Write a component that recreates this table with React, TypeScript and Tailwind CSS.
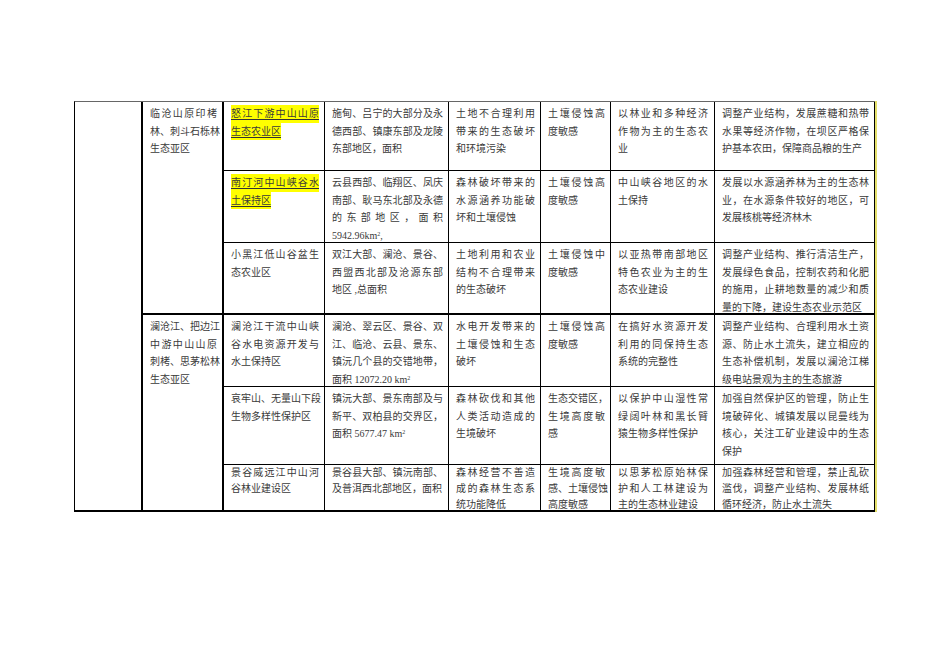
import React from "react";

type Line = React.ReactNode;

type CellProps = {
  lines: Line[];
  hl?: boolean;
  justifyLast?: boolean;
  className?: string;
};

const km2 = (
  <>
    km<sup className="text-[6px]">2</sup>
  </>
);

function Cell({ lines, hl, justifyLast, className = "" }: CellProps) {
  return (
    <div className={`border-b border-r border-black pl-[7px] pr-[5px] ${className}`}>
      {lines.map((line, i) => {
        const justify = i < lines.length - 1 || justifyLast;
        return (
          <div
            key={i}
            className={`whitespace-nowrap ${justify ? "text-justify [text-align-last:justify]" : "text-left"}`}
          >
            {hl ? (
              <span
                className={`${justify ? "block" : "inline-block"} bg-[#ffff00] underline decoration-[#333] underline-offset-2`}
              >
                {line}
              </span>
            ) : (
              line
            )}
          </div>
        );
      })}
    </div>
  );
}

const ROWS: { c3: Line[]; hl?: boolean; c4: Line[]; c5: Line[]; c6: Line[]; c7: Line[]; c8: Line[] }[] = [
  {
    c3: ["怒江下游中山山原", "生态农业区"],
    hl: true,
    c4: ["施甸、吕宁的大部分及永", "德西部、镇康东部及龙陵", "东部地区，面积"],
    c5: ["土地不合理利用", "带来的生态破坏", "和环境污染"],
    c6: ["土壤侵蚀高", "度敏感"],
    c7: ["以林业和多种经济", "作物为主的生态农", "业"],
    c8: ["调整产业结构，发展蔗糖和热带", "水果等经济作物，在坝区严格保", "护基本农田，保障商品粮的生产"],
  },
  {
    c3: ["南汀河中山峡谷水", "土保持区"],
    hl: true,
    c4: ["云县西部、临翔区、凤庆", "南部、耿马东北部及永德", "的东部地区，面积", <>5942.96{km2},</>],
    c5: ["森林破坏带来的", "水源涵养功能破", "坏和土壤侵蚀"],
    c6: ["土壤侵蚀高", "度敏感"],
    c7: ["中山峡谷地区的水", "土保持"],
    c8: ["发展以水源涵养林为主的生态林", "业，在水源条件较好的地区，可", "发展核桃等经济林木"],
  },
  {
    c3: ["小黑江低山谷盆生", "态农业区"],
    c4: ["双江大部、澜沧、景谷、", "西盟西北部及沧源东部", "地区 ,总面积"],
    c5: ["土地利用和农业", "结构不合理带来", "的生态破坏"],
    c6: ["土壤侵蚀中", "度敏感"],
    c7: ["以亚热带南部地区", "特色农业为主的生", "态农业建设"],
    c8: ["调整产业结构、推行清洁生产，", "发展绿色食品，控制农药和化肥", "的施用，止耕地数量的减少和质", "量的下降，建设生态农业示范区"],
  },
  {
    c3: ["澜沧江干流中山峡", "谷水电资源开发与", "水土保持区"],
    c4: ["澜沧、翠云区、景谷、双", "江、临沧、云县、景东、", "镇沅几个县的交错地带，", <>面积 12072.20 {km2}</>],
    c5: ["水电开发带来的", "土壤侵蚀和生态", "破坏"],
    c6: ["土壤侵蚀高", "度敏感"],
    c7: ["在搞好水资源开发", "利用的同保持生态", "系统的完整性"],
    c8: ["调整产业结构、合理利用水土资", "源、防止水土流失，建立相应的", "生态补偿机制，发展以澜沧江梯", "级电站景观为主的生态旅游"],
  },
  {
    c3: ["哀牢山、无量山下段", "生物多样性保护区"],
    c4: ["镇沅大部、景东南部及与", "新平、双柏县的交界区，", <>面积 5677.47 {km2}</>],
    c5: ["森林砍伐和其他", "人类活动造成的", "生境破坏"],
    c6: ["生态交错区，", "生境高度敏", "感"],
    c7: ["以保护中山湿性常", "绿阔叶林和黑长臂", "猿生物多样性保护"],
    c8: ["加强自然保护区的管理，防止生", "境破碎化、城镇发展以昆曼线为", "核心，关注工矿业建设中的生态", "保护"],
  },
  {
    c3: ["景谷威远江中山河", "谷林业建设区"],
    c4: ["景谷县大部、镇沅南部、", "及普洱西北部地区，面积"],
    c5: ["森林经营不善造", "成的森林生态系", "统功能降低"],
    c6: ["生境高度敏", "感、土壤侵蚀", "高度敏感"],
    c7: ["以思茅松原始林保", "护和人工林建设为", "主的生态林业建设"],
    c8: ["加强森林经营和管理，禁止乱砍", "滥伐，调整产业结构、发展林纸", "循环经济，防止水土流失"],
  },
];

const ZONES: Line[][] = [
  ["临沧山原印栲", "林、刺斗石栎林", "生态亚区"],
  ["澜沧江、把边江", "中游中山山原", "刺栲、思茅松林", "生态亚区"],
];

export default function App() {
  return (
    <div className="min-h-[672px] bg-white pl-[74px] pt-[101px] font-['Liberation_Serif','Noto_Sans_CJK_SC',serif] text-[10px] leading-[17.5px] text-[#3a3a3a]">
      <div className="flex w-max">
        <div className="grid grid-cols-[68px_81px_101px_124px_92px_70px_104px_160px] grid-rows-[69px_72px_72px_72px_78px_47px] border-l border-t border-l-black border-t-[#666]">
          <div className="row-span-6 border-b-2 border-r-2 border-black" />
          {ROWS.map((r, i) => {
            const last = i === 5;
            const bottom = i === 2 ? "border-b-2 pt-[3px]" : last ? "border-b-2 pt-0 leading-[16px]" : "pt-[3px]";
            return (
              <React.Fragment key={i}>
                {i % 3 === 0 && (
                  <Cell lines={ZONES[i / 3]} className="row-span-3 border-b-2 border-r-2 pt-[3px]" />
                )}
                <Cell lines={r.c3} hl={r.hl} className={`border-r-[1.5px] ${bottom}`} />
                <Cell lines={r.c4} className={`pl-[6px] pr-[4px] ${bottom}`} />
                <Cell lines={r.c5} className={bottom} />
                <Cell lines={r.c6} className={`pl-[6px] pr-[5px] ${bottom}`} />
                <Cell lines={r.c7} className={`pl-[6px] pr-[6px] ${bottom}`} />
                <Cell lines={r.c8} className={`pl-[7px] pr-[5px] ${bottom}`} />
              </React.Fragment>
            );
          })}
        </div>
        <div className="w-[2px] bg-[#e4df6a]" />
      </div>
    </div>
  );
}
